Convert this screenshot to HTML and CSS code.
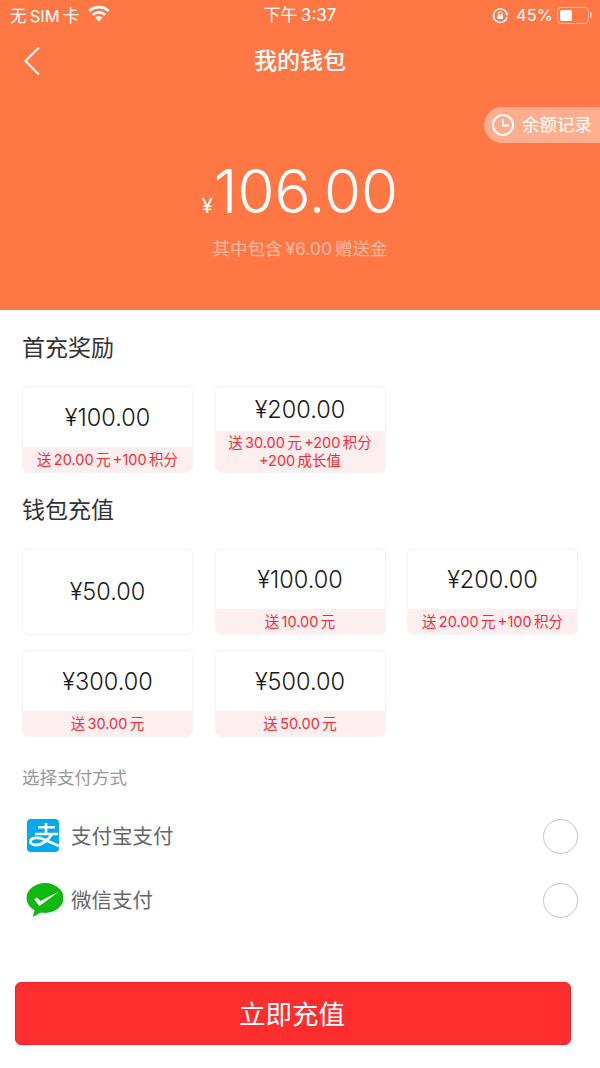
FILE: index.html
```html
<!DOCTYPE html>
<html lang="zh-CN">
<head>
<meta charset="utf-8">
<title>我的钱包</title>
<link rel="stylesheet" href="styles.css">
</head>
<body>
<div class="page">
  <header class="hero">
    <div class="status">
      <div class="status-left">
        <span>无 SIM 卡</span>
        <svg class="wifi" width="22" height="17" viewBox="0 0 22 17"><path d="M11 16.700 7.300 12.600a5.500 5.500 0 0 1 7.400 0Z" fill="#fff"/><path d="M4.800 9.800a9.300 9.300 0 0 1 12.400 0M1.300 5.900a14.500 14.500 0 0 1 19.400 0" fill="none" stroke="#fff" stroke-width="2.800"/></svg>
      </div>
      <div class="status-time">下午 3:37</div>
      <div class="status-right">
        <svg width="17" height="17" viewBox="0 0 17 17"><path d="M14.800 6.500A6.800 6.800 0 1 0 15 10" fill="none" stroke="#fff" stroke-width="1.500"/><path d="M12.800 6.500h4l-2 2.500Z" fill="#fff"/><rect x="5.500" y="7.500" width="5.500" height="4.500" rx=".6" fill="#fff"/><path d="M6.500 7.500V6.300a1.700 1.700 0 0 1 3.500 0v1.200" fill="none" stroke="#fff"/></svg>
        <span class="pct">45%</span>
        <span class="battery"><span class="battery-fill"></span></span>
        <span class="battery-cap"></span>
      </div>
    </div>
    <div class="nav">
      <svg class="back" width="18" height="30" viewBox="0 0 18 30"><path d="M16 1.500 2.500 15 16 28.500" fill="none" stroke="#fff" stroke-width="2"/></svg>
      <h1>我的钱包</h1>
    </div>
    <div class="amount"><span class="currency">¥</span><span class="value">106.00</span></div>
    <div class="note">其中包含 ¥6.00 赠送金</div>
    <div class="history">
      <svg width="24" height="24" viewBox="0 0 24 24"><circle cx="12" cy="12" r="10" fill="none" stroke="#fff" stroke-width="2"/><path d="M12 6V12.500H18" fill="none" stroke="#fff" stroke-width="2"/></svg>
      <span class="history-label">余额记录</span>
    </div>
  </header>

  <main class="content">
    <h2>首充奖励</h2>
    <div class="grid">
      <div class="card"><div class="price">¥100.00</div><div class="bonus">送 20.00 元 +100 积分</div></div>
      <div class="card"><div class="price">¥200.00</div><div class="bonus two">送 30.00 元 +200 积分<br>+200 成长值</div></div>
    </div>
    <h2 class="second">钱包充值</h2>
    <div class="grid">
      <div class="card"><div class="price">¥50.00</div></div>
      <div class="card"><div class="price">¥100.00</div><div class="bonus">送 10.00 元</div></div>
      <div class="card"><div class="price">¥200.00</div><div class="bonus">送 20.00 元 +100 积分</div></div>
      <div class="card"><div class="price">¥300.00</div><div class="bonus">送 30.00 元</div></div>
      <div class="card"><div class="price">¥500.00</div><div class="bonus">送 50.00 元</div></div>
    </div>
    <div class="pay-title">选择支付方式</div>
    <div class="pay-row">
      <svg class="pay-icon" width="34" height="34" viewBox="0 0 34 34"><rect x="1" y="1" width="32" height="33" rx="4" fill="#02A9F1"/><path d="M12 9.300H29M20 5V16M9 16H32" fill="none" stroke="#fff" stroke-width="2.600"/><path d="M26 16C23 21 17 27 10 27 6 27 4 25 4.500 23 5 19.500 12 19 17 21L33 28" fill="none" stroke="#fff" stroke-width="2.800"/></svg>
      <span class="pay-name">支付宝支付</span>
      <span class="radio"></span>
    </div>
    <div class="pay-row">
      <svg class="pay-icon wechat" width="38" height="36" viewBox="0 0 38 36"><ellipse cx="20" cy="16" rx="18.500" ry="15" fill="#0FB90F"/><path d="M10 27 7.700 35 17 30Z" fill="#0FB90F"/><path d="M9 17.500 12 15.500 15.500 19 34 9.500 14.500 24Z" fill="#fff"/></svg>
      <span class="pay-name">微信支付</span>
      <span class="radio"></span>
    </div>
    <button class="submit"><span class="submit-label">立即充值</span></button>
  </main>
</div>
</body>
</html>
```
FILE: styles.css
```css
* { box-sizing: border-box; }
html, body { margin: 0; padding: 0; }
body {
  width: 600px;
  height: 1068px;
  overflow: hidden;
  background: #fff;
  font-family: Inter, "Noto Sans CJK SC", sans-serif;
  color: #222;
}
.page { width: 600px; height: 1068px; }

.hero {
  position: relative;
  height: 310px;
  background: #ff7745;
  color: #fff;
  text-align: center;
}
.status {
  display: flex;
  align-items: center;
  justify-content: space-between;
  height: 30px;
  padding: 0 8px 0 10px;
  font-size: 16.500px;
  word-spacing: -1.500px;
  position: relative;
}
.status-left { display: flex; align-items: center; gap: 9px; }
.wifi { margin-top: -3px; }
.status-time {
  position: absolute;
  left: 0;
  right: 0;
  top: 5px;
  text-align: center;
  line-height: 20px;
  font-size: 17px;
}
.status-right { display: flex; align-items: center; gap: 0; }
.pct { margin: 0 4px 0 7px; font-size: 16.500px; }
.battery {
  width: 32px;
  height: 17px;
  border: 1px solid rgba(255,255,255,.5);
  border-radius: 4px;
  padding: 2px;
  display: flex;
}
.battery-fill { width: 12px; background: #fff; border-radius: 2px; }
.battery-cap { width: 2px; height: 6px; background: rgba(255,255,255,.5); border-radius: 0 2px 2px 0; margin-left: 1px; }

.nav {
  position: relative;
  height: 62px;
  display: flex;
  align-items: center;
  justify-content: center;
}
.back { position: absolute; left: 23px; top: 16px; }
.nav h1 { margin: 0; font-size: 23px; font-weight: 500; line-height: 62px; }

.amount {
  margin-top: 62px;
  height: 74px;
  display: flex;
  align-items: baseline;
  justify-content: center;
  line-height: 74px;
}
.currency { font-size: 20px; margin-right: 1px; }
.value { font-size: 60px; font-weight: 300; }
.note {
  margin-top: 10px;
  font-size: 17.500px;
  word-spacing: -2px;
  line-height: 22px;
  color: rgba(255,255,255,.5);
}
.history {
  position: absolute;
  right: 0;
  top: 107px;
  width: 116px;
  height: 36px;
  border-radius: 18px 0 0 18px;
  background: rgba(255,255,255,.4);
  display: flex;
  align-items: center;
  padding-left: 7px;
  gap: 7px;
  font-size: 17.500px;
}
.history-label { margin-bottom: 3px; }

.content { padding: 0 22px; position: relative; }
h2 {
  margin: 0;
  padding-top: 22px;
  font-size: 23px;
  font-weight: 400;
  line-height: 32px;
  height: 76px;
  color: #333;
}
h2.second { padding-top: 21px; height: 75px; }
.grid {
  display: grid;
  grid-template-columns: repeat(3, 171px);
  column-gap: 21.500px;
  row-gap: 15px;
}
.card {
  height: 87px;
  border: 1px solid #f3f3f3;
  border-radius: 6px;
  overflow: hidden;
  display: flex;
  flex-direction: column;
}
.price {
  flex: 1;
  display: flex;
  align-items: center;
  justify-content: center;
  font-size: 23.500px;
  font-weight: 350;
  color: #1a1a1a;
}
.bonus {
  background: #fdeef0;
  color: #fb2a33;
  font-size: 14.500px;
  word-spacing: -1.700px;
  line-height: 18px;
  padding: 4px 0 3px;
  text-align: center;
}
.bonus.two { padding: 3px 0 2px; }
.pay-title {
  margin-top: 30px;
  margin-bottom: 14px;
  font-size: 17.500px;
  line-height: 22px;
  color: #999;
}
.pay-row {
  display: flex;
  align-items: center;
  height: 64px;
  position: relative;
  padding-left: 49px;
}
.pay-icon { position: absolute; left: 4px; top: 15px; }
.pay-icon.wechat { left: 3px; }
.pay-name { font-size: 20.500px; color: #666; }
.radio {
  position: absolute;
  right: 0;
  top: 16px;
  width: 35px;
  height: 35px;
  border: 1.500px solid #c4c4c4;
  border-radius: 50%;
}
.submit {
  display: block;
  margin: 51px 0 0 -7px;
  width: 556px;
  height: 63px;
  padding: 0 2px 3px 0;
  border: 1px solid #fb1e26;
  border-radius: 6px;
  background: #ff2e2e;
  color: #fff;
  font: inherit;
  font-size: 26.500px;
}
```
